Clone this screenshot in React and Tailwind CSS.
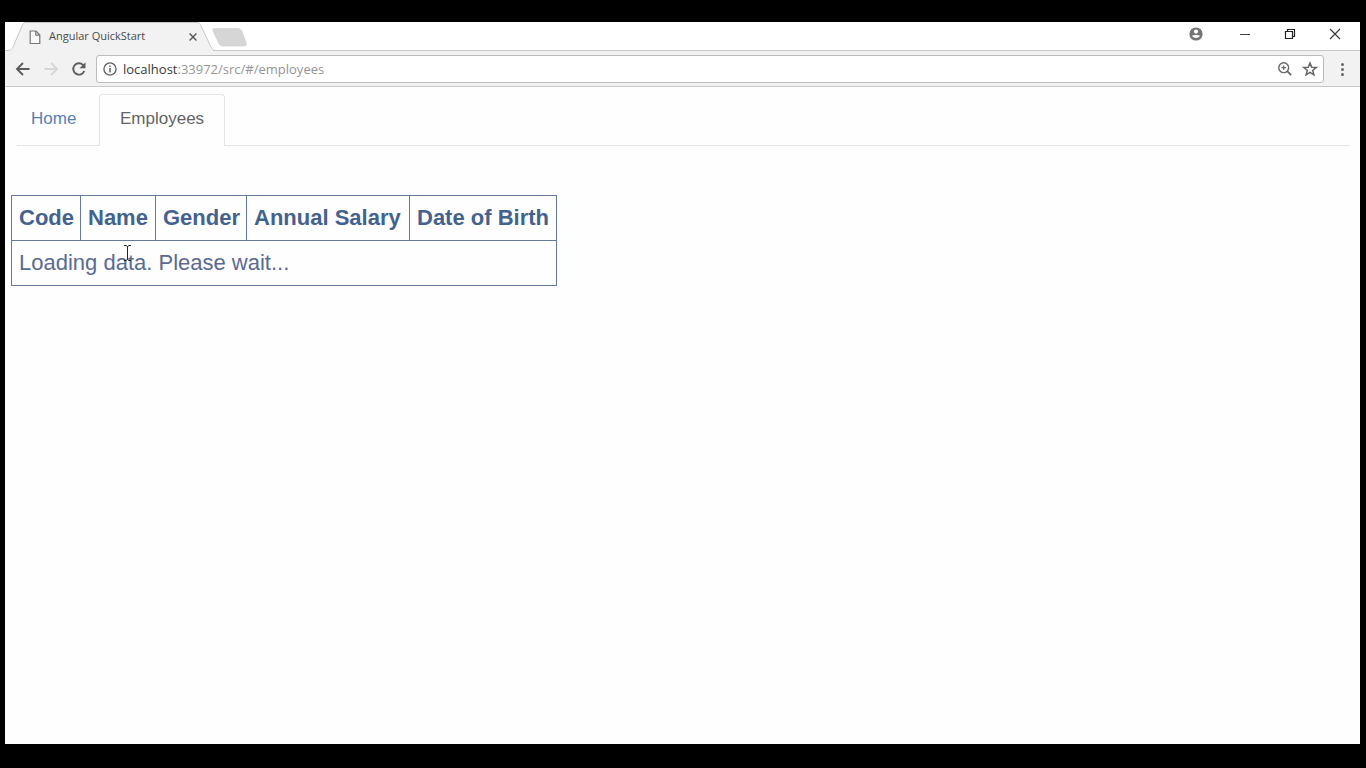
const columns = ['Code', 'Name', 'Gender', 'Annual Salary', 'Date of Birth'];

function TabStrip() {
  return (
    <div className="relative flex h-[29px] items-stretch bg-white">
      <svg className="absolute left-0 top-0 h-[29px] w-64" viewBox="0 0 256 29" fill="none" aria-hidden="true">
        <path d="M0 28.500H4C6 28.500 7 27 8 25L17 4C18 1.500 19 .5 21 .5H192C194 .5 195 1.500 196 4L206 25C207 27 208 28.500 210 28.500V29H0Z" fill="#f2f2f2" />
        <path d="M0 28.500H3C6 28.500 7 27 8 25L17 4C18 1.500 19 .5 21 .5H192C194 .5 195 1.500 196 4L206 25C207 27 208 28.500 211 28.500H256" stroke="#c8c8c8" />
        <path d="M209.500 6.500H232C235 6.500 236 7.500 237 9.500L241 20.500C242 23 241 24 239 24H218C216 24 214.500 23 213.500 20.500L208 9C207.300 7.500 208 6.500 209.500 6.500Z" fill="#d6d6d6" stroke="#cecece" strokeWidth=".6" />
      </svg>
      <div className="relative flex w-52 items-center pl-6">
        <svg className="h-4 w-3" viewBox="0 0 12 16" fill="#fafafa" stroke="#777" strokeWidth="1.200" aria-hidden="true">
          <path d="M1.200 2H7L10.800 6V14.500H1.200Z" />
          <path d="M6.800 2V6.200H10.800" fill="none" />
        </svg>
        <span className="ml-2 flex-1 whitespace-nowrap text-[11px] text-[#4a4a4a]">Angular QuickStart</span>
        <button type="button" aria-label="Close tab" className="mr-3 flex size-4 items-center justify-center">
          <svg className="size-2" viewBox="0 0 8 8" stroke="#555" strokeWidth="1.400" aria-hidden="true">
            <path d="M.6 .6 7.400 7.400M7.400 .6.6 7.400" />
          </svg>
        </button>
      </div>
      <div className="relative flex flex-1 items-center justify-end border-b border-[#c8c8c8] pb-1">
        <button type="button" aria-label="Profile" className="mr-[14px] flex h-full w-6 items-center justify-center">
          <svg className="size-[14px]" viewBox="0 0 14 14" aria-hidden="true">
            <circle cx="7" cy="7" r="6.600" fill="#747474" />
            <circle cx="7" cy="4.600" r="2.100" fill="#fff" />
            <path d="M3 8.800C4.500 7.700 9.500 7.700 11 8.800 9.800 11.600 4.200 11.600 3 8.800Z" fill="#fff" />
          </svg>
        </button>
        <button type="button" aria-label="Minimize" className="flex h-full w-[45px] items-center justify-center">
          <svg className="size-3" viewBox="0 0 12 12" stroke="#444" aria-hidden="true"><path d="M1 6.500H11" /></svg>
        </button>
        <button type="button" aria-label="Restore" className="flex h-full w-[45px] items-center justify-center">
          <svg className="size-3" viewBox="0 0 12 12" fill="none" stroke="#222" strokeWidth="1.200" aria-hidden="true">
            <path d="M1.500 3.500H8.500V10.500H1.500ZM3.500 3.500V1.500H10.500V8.500H8.500" />
          </svg>
        </button>
        <button type="button" aria-label="Close" className="mr-[3px] flex h-full w-[45px] items-center justify-center">
          <svg className="size-3" viewBox="0 0 12 12" stroke="#3a3a3a" strokeWidth="1.200" aria-hidden="true">
            <path d="M1 1 11 11M11 1 1 11" />
          </svg>
        </button>
      </div>
    </div>
  );
}

function Toolbar() {
  return (
    <div className="flex h-9 items-center border-b border-[#c8c8c8] bg-[#f2f2f2] pl-[10px]">
      <button type="button" aria-label="Back" className="mr-3 size-4">
        <svg viewBox="0 0 16 16" fill="none" stroke="#5c5c5c" strokeWidth="1.900" aria-hidden="true">
          <path d="M14.500 8H2.500M8 2 2 8 8 14" />
        </svg>
      </button>
      <button type="button" aria-label="Forward" disabled className="mr-3 size-4">
        <svg viewBox="0 0 16 16" fill="none" stroke="#d6d6d6" strokeWidth="1.900" aria-hidden="true">
          <path d="M1.500 8H13.500M8 2 14 8 8 14" />
        </svg>
      </button>
      <button type="button" aria-label="Reload" className="mr-[9px] size-4">
        <svg viewBox="0 0 16 16" fill="none" aria-hidden="true">
          <path d="M13.300 10A5.700 5.700 0 1 1 12 3.900L13.200 5.200" stroke="#5c5c5c" strokeWidth="1.900" />
          <path d="M14.500 1.200V7.200H8.500Z" fill="#5c5c5c" />
        </svg>
      </button>
      <div className="flex h-7 flex-1 items-center rounded-[3px] border border-[#bcbcbc] bg-white pl-[6px] pr-[5px]">
        <svg className="size-[14px]" viewBox="0 0 14 14" fill="none" stroke="#606060" strokeWidth="1.300" aria-hidden="true">
          <circle cx="7" cy="7" r="6.100" />
          <path d="M7 6V10.500M7 3.500V5" strokeWidth="1.500" />
        </svg>
        <a href="#/employees" className="ml-[6px] flex-1 whitespace-nowrap text-[13px] leading-5 text-[#959595]">
          <span className="text-[#3a3a3a]">localhost</span>:33972/src/#/employees
        </a>
        <button type="button" aria-label="Zoom" className="mr-[10px] size-[14px]">
          <svg viewBox="0 0 14 14" fill="none" stroke="#666" strokeWidth="1.400" aria-hidden="true">
            <circle cx="5.700" cy="5.700" r="4.900" />
            <path d="M9.200 9.200 13.200 13.200" strokeWidth="1.800" />
            <path d="M3.400 5.700H8M5.700 3.400V8" strokeWidth="1.200" />
          </svg>
        </button>
        <button type="button" aria-label="Bookmark this page" className="size-4">
          <svg viewBox="0 0 16 16" fill="none" stroke="#666" strokeWidth="1.500" aria-hidden="true">
            <path d="M8 2 9.700 6.200 14.200 6.500 10.700 9.400 11.900 13.900 8 11.400 4.100 13.900 5.300 9.400 1.800 6.500 6.300 6.200Z" />
          </svg>
        </button>
      </div>
      <button type="button" aria-label="Menu" className="mx-[10px] size-4">
        <svg viewBox="0 0 16 16" fill="#666" aria-hidden="true">
          <circle cx="8.500" cy="3.500" r="1.500" />
          <circle cx="8.500" cy="8.500" r="1.500" />
          <circle cx="8.500" cy="13.500" r="1.500" />
        </svg>
      </button>
    </div>
  );
}

function Page() {
  return (
    <main className="flex-1 bg-[#fefefe] font-['Liberation_Sans',Arial,sans-serif]">
      <nav className="ml-3 mr-[10px] flex pt-[7px] text-[17px] leading-6">
        <a href="#/home" className="w-[82px] border-b border-[#e4e4e4] pb-[14px] pl-[14px] pt-[13px] text-[#5480b4]">Home</a>
        <a href="#/employees" aria-current="page" className="w-[126px] rounded-t-[4px] border border-b-0 border-[#e4e4e4] pb-[15px] pl-5 pt-3 text-[#646464]">
          Employees
        </a>
        <div className="flex-1 border-b border-[#e4e4e4]" />
      </nav>
      <table className="ml-[6px] mt-[49px] w-[545px] table-fixed border-collapse text-left text-[22px] leading-8">
        <colgroup>
          <col className="w-[69px]" />
          <col className="w-[75px]" />
          <col className="w-[91px]" />
          <col className="w-[163px]" />
          <col className="w-[147px]" />
        </colgroup>
        <thead>
          <tr>
            {columns.map((name) => (
              <th key={name} scope="col" className="whitespace-nowrap border border-[#647a9c] py-[6px] pl-[7px] font-bold text-[#43628f]">
                {name}
              </th>
            ))}
          </tr>
        </thead>
        <tbody>
          <tr>
            <td colSpan={5} className="relative border border-[#647a9c] py-[6px] pl-[7px] text-[#5a6a92]">
              Loading data. Please wait...
              <svg className="absolute left-[111px] top-1 h-4 w-2" viewBox="0 0 8 16" fill="none" stroke="#222" strokeWidth="1" aria-hidden="true">
                <path d="M1 .5H3L4.500 1.500 6 .5H8M4.500 1.500V14.500M1 15.500H3L4.500 14.500 6 15.500H8" />
              </svg>
            </td>
          </tr>
        </tbody>
      </table>
    </main>
  );
}

export default function App() {
  return (
    <div className="flex min-h-screen flex-col bg-black pb-6 pl-[5px] pr-[6px] pt-[22px] font-['Open_Sans','Noto_Sans',sans-serif]">
      <div className="flex flex-1 flex-col bg-white">
        <TabStrip />
        <Toolbar />
        <Page />
      </div>
    </div>
  );
}
